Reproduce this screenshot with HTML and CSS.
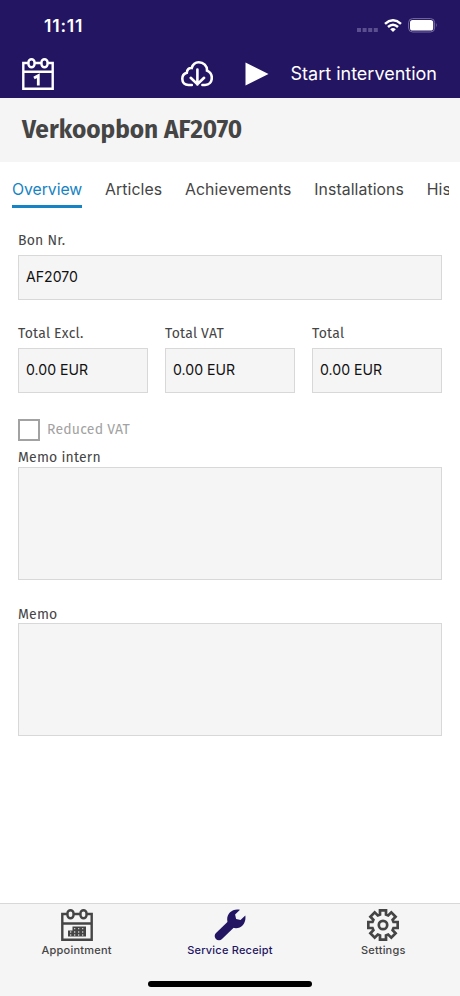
FILE: index.html
```html
<!DOCTYPE html>
<html lang="en">
<head>
<meta charset="utf-8">
<meta name="viewport" content="width=device-width">
<title>Verkoopbon AF2070</title>
<link rel="stylesheet" href="styles.css">
</head>
<body>
<header class="topbar">
  <div class="status">
    <span class="time">11:11</span>
    <div class="indicators">
      <svg class="cell" width="21" height="4" viewBox="0 0 21 4"><path d="M0 0h4v4H0zM5.6 0h4v4h-4zM11.2 0h4v4h-4zM16.8 0h4v4h-4z"/></svg>
      <svg class="wifi" width="18" height="13" viewBox="0 0 18 13" fill="none" stroke="#fff" stroke-width="2.5"><path d="M1 4.9Q9-2.3 17 4.9"/><path d="M4 8Q9 3.6 14 8"/><path d="M9 13 6.2 10.2Q9 7.8 11.8 10.2z" fill="#fff" stroke="none"/></svg>
      <svg class="battery" width="30" height="15" viewBox="0 0 30 15"><rect x=".6" y=".6" width="26" height="13.4" rx="4" fill="none" stroke="#756ba1"/><rect x="2" y="2" width="23.2" height="10.6" rx="2.6" fill="#fff"/><path d="M28 5q1.7 2.3 0 4.6z" fill="#756ba1"/></svg>
    </div>
  </div>
  <div class="actions">
    <svg class="calendar" width="32" height="32" viewBox="0 0 32 32" fill="none" stroke="#fff" stroke-width="2.4"><path d="M6 5H1.3v25.7h29.4V5H26M13 5h6M1.3 13.8h29.4"/><rect x="6.5" y="1.3" width="6" height="8" rx="3"/><rect x="19.5" y="1.3" width="6" height="8" rx="3"/><path d="m12 20 4.3-2.3v9.8" stroke-width="2.8"/></svg>
    <svg class="cloud" width="32" height="26" viewBox="0 0 32 26" fill="none" stroke="#fff" stroke-width="2.6" stroke-linecap="round"><path d="M10.8 24H7.5C3.7 24 1.3 21.4 1.3 17.8c0-3 1.8-5.2 4.5-6C6 8.2 8.1 6.7 10.7 7c1.1-3.5 3.7-5.7 7-5.7 4.9 0 8.5 3.6 8.3 8.3 3 1.3 4.8 4 4.8 7.2 0 4.2-2.7 7.2-6.7 7.2h-2.7"/><path d="M16.4 8.5V23.5M9.7 16.8l6.7 6.5 6.7-6.5"/></svg>
    <svg class="play" width="24" height="24" viewBox="0 0 24 24"><path d="M.5.5v23L23.5 12z" fill="#fff"/></svg>
    <span class="start">Start intervention</span>
  </div>
</header>
<div class="titlebar"><h1>Verkoopbon AF2070</h1></div>
<nav class="tabs">
  <a class="tab active">Overview</a>
  <a class="tab">Articles</a>
  <a class="tab">Achievements</a>
  <a class="tab">Installations</a>
  <a class="tab">His</a>
</nav>
<main class="form">
  <div class="field"><label>Bon Nr.</label><div class="box">AF2070</div></div>
  <div class="totals">
    <div class="field"><label>Total Excl.</label><div class="box">0.00 EUR</div></div>
    <div class="field"><label>Total VAT</label><div class="box">0.00 EUR</div></div>
    <div class="field"><label>Total</label><div class="box">0.00 EUR</div></div>
  </div>
  <div class="check"><span class="square"></span><span class="check-label">Reduced VAT</span></div>
  <div class="memo"><label>Memo intern</label><div class="area"></div></div>
  <div class="memo"><label>Memo</label><div class="area"></div></div>
</main>
<footer class="bottom">
  <nav class="bottom-nav">
    <a class="item">
      <svg width="32" height="32" viewBox="0 0 32 32" fill="none" stroke="#454545" stroke-width="2.4"><path d="M6 5H1.3v25.7h29.4V5H26M13 5h6M1.3 14.5h29.4"/><rect x="6.5" y="1.3" width="6" height="8" rx="3"/><rect x="19.5" y="1.3" width="6" height="8" rx="3"/><path d="M11.5 17.5H25V27.5H7V21.5h4.5z" fill="#454545" stroke="none"/><path d="M9 23h1.3M13 23h1.3M17 23h1.3M21 23h1.3M13 19.7h1.3M17 19.7h1.3M21 19.7h1.3M9 26h1.3M13 26h1.3M17 26h1.3M21 26h1.3" stroke="#c8c8c8" stroke-width="1.3"/></svg>
      <span>Appointment</span>
    </a>
    <a class="item active">
      <svg width="32" height="32" viewBox="0 0 32 32"><path d="M5 27 19 13.5" stroke="#241563" stroke-width="8.6" stroke-linecap="round"/><path d="M26 .8C19-1 12.8 4 13.2 11c.3 5 4.3 8.2 8.8 8.2 6 0 10.4-5.8 9.3-12.6L26.5 11l-4.4-.9-1-4.6z" fill="#241563"/></svg>
      <span>Service Receipt</span>
    </a>
    <a class="item">
      <svg width="32" height="32" viewBox="0 0 32 32" fill="none" stroke="#454545" stroke-width="2.7"><path d="M13 1.3h6v4.2l2.2.9 3.1-3 4.3 4.3-3 3.1.9 2.2h4.2v6h-4.2l-.9 2.2 3 3.1-4.3 4.3-3.1-3-2.2.9v4.2h-6v-4.2l-2.2-.9-3.1 3-4.3-4.3 3-3.1-.9-2.2H1.3v-6h4.2l.9-2.2-3-3.1 4.3-4.3 3.1 3 2.2-.9z"/><circle cx="16" cy="16" r="4.2"/></svg>
      <span>Settings</span>
    </a>
  </nav>
  <div class="home"></div>
</footer>
</body>
</html>
```
FILE: styles.css
```css
* { box-sizing: border-box; }
body {
  margin: 0;
  height: 996px;
  display: flex;
  flex-direction: column;
  overflow: hidden;
  background: #fff;
  color: #454545;
  font-family: Inter, sans-serif;
}
svg { display: block; flex: none; }
h1 { margin: 0; }
.topbar { height: 98px; background: #241563; color: #fff; flex: none; }
.status {
  height: 50px;
  padding: 0 22px 0 44px;
  display: flex;
  justify-content: space-between;
  align-items: center;
}
.time { font-size: 17.5px; font-weight: 600; line-height: 20px; letter-spacing: 0.8px; padding-top: 2px; }
.indicators { display: flex; align-items: center; }
.cell { fill: #5b4f8f; margin: 9px 6px 0 0; }
.wifi { margin-right: 6px; }
.actions { height: 48px; padding: 0 23px 0 22px; display: flex; align-items: center; }
.cloud { margin-left: 127px; }
.play { margin-left: 32px; }
.calendar { margin-top: -1px; }
.start { margin-left: auto; font-size: 18px; white-space: nowrap; margin-top: -1px; }
.titlebar { height: 64px; flex: none; background: #f5f5f5; padding: 15px 22px; }
.titlebar h1 {
  font: 700 24.5px/34px "Fira Sans", "Noto Sans", sans-serif;
}
.tabs {
  flex: none;
  height: 46px;
  margin: 0 11px 0 12px;
  display: flex;
  gap: 22.9px;
  overflow: hidden;
}
.tab { height: 46px; padding-top: 17px; font-size: 15.8px; line-height: 21px; white-space: nowrap; letter-spacing: 0.07px; }
.tab.active { color: #1583c4; border-bottom: 3px solid #1583c4; letter-spacing: -0.05px; }
.form { flex: 1; padding: 23px 18px 0; }
label, .check-label {
  display: block;
  font: 400 14px/20px "Fira Sans", "Noto Sans", sans-serif;
  letter-spacing: 0.2px;
}
.box {
  height: 44.5px;
  margin-top: 4px;
  padding-left: 7px;
  border: 1px solid #d8d8d8;
  background: #f5f5f5;
  color: #111;
  font-size: 14.1px;
  line-height: 42px;
}
.totals { display: grid; grid-template-columns: repeat(3, 1fr); gap: 17px; margin-top: 24.5px; }
.check { display: flex; align-items: center; gap: 7px; height: 23px; margin: 25.5px 0 6px; }
.square { width: 22px; height: 22px; border: 2px solid #a2a2a2; }
.check-label { color: #a2a2a2; }
.memo { margin-bottom: 24px; }
.memo label { line-height: 19px; padding-top: 1px; }
.area { height: 113px; border: 1px solid #d8d8d8; background: #f5f5f5; margin-top: -0.4px; }
.bottom {
  flex: none;
  height: 93px;
  border-top: 1px solid #d8d8d8;
  background: #f5f5f5;
  display: flex;
  flex-direction: column;
  align-items: center;
}
.bottom-nav { width: 460px; height: 77px; display: grid; grid-template-columns: repeat(3, 1fr); }
.item {
  display: flex;
  flex-direction: column;
  align-items: center;
  padding-top: 5px;
  font-size: 11px;
  font-weight: 500;
  line-height: 18px;
  letter-spacing: 0.22px;
}
.item.active { color: #241563; }
.home { width: 164px; height: 6px; border-radius: 3px; background: #000; }
```
